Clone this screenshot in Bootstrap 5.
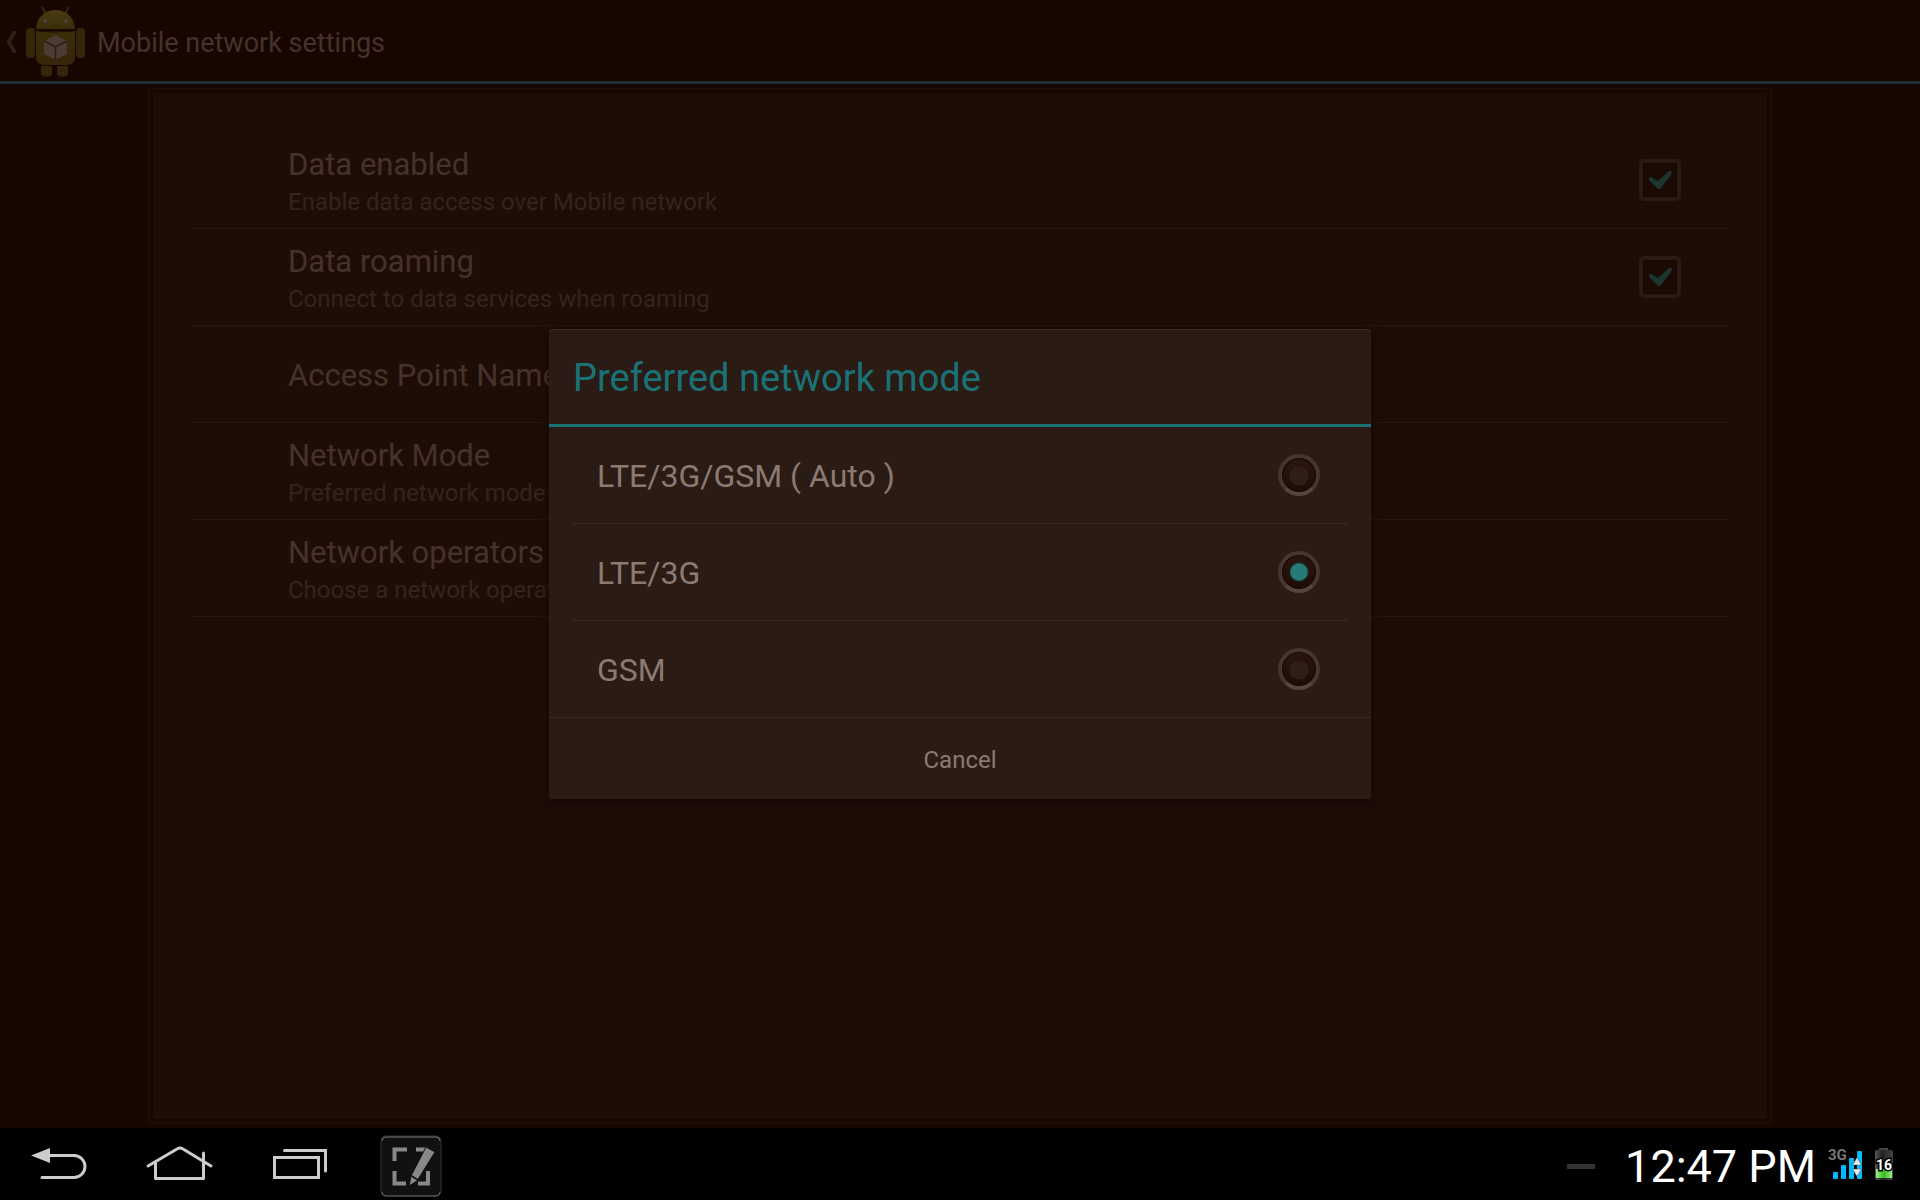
<!DOCTYPE html>
<html lang="en">
<head>
<meta charset="utf-8">
<meta name="viewport" content="width=device-width, initial-scale=1">
<title>Mobile network settings</title>
<link href="https://cdn.jsdelivr.net/npm/bootstrap@5.3.0/dist/css/bootstrap.min.css" rel="stylesheet">
<style>
:root { --dim-teal: #1c2f31; --teal: #1a7277; --ink: #8b7972; --dim-ink: #45322c; --dim-sub: #35231d; }
body { background: #170600; color: var(--dim-ink); font-family: Roboto, "Noto Sans", sans-serif; }
.action-bar { height: 84px; border-bottom: 3px solid var(--dim-teal); }
.action-bar h1 { font-size: 27px; line-height: 36px; font-weight: 400; padding-top: 4px; }
.up-link { color: inherit; padding: 0 9px 0 4px; }
.pref-area { padding: 4px 148px; }
.pref-frame { border: 2px solid #1e0d07; padding: 3px; }
.pref-panel { background: #1e0d07; padding: 39px 39px 0; }
.pref-row { min-height: 97px; border-bottom: 1px solid #27160f; padding: 0 47px 0 96px; }
.pref-text { padding-top: 3px; }
.pref-title { font-size: 31px; line-height: 40px; }
.pref-sub { font-size: 24px; line-height: 34px; color: var(--dim-sub); }
.holo-check { appearance: none; width: 42px; height: 42px; margin: 0; border: 4px solid #2b1a14; border-radius: 5px; box-shadow: inset 0 0 0 1px #130500;
  background: #1b0a04 url("data:image/svg+xml,%3Csvg xmlns='http://www.w3.org/2000/svg' viewBox='0 0 34 34'%3E%3Cpath d='M6 15l2-1 7 4L26 8l3 0-1 4-11 14-2 0-9-9z' fill='%231d3530'/%3E%3C/svg%3E") center/34px no-repeat; }
.picker { width: 822px; background: #2b1b15; border-top: 1px solid #3a2922; border-radius: 3px; box-shadow: 0 4px 10px 2px rgba(16,4,0,.5); color: var(--ink); }
.picker-title { font-size: 38px; line-height: 48px; font-weight: 400; color: var(--teal); padding: 24px 24px 22px; border-bottom: 3px solid var(--teal); }
.picker-row { height: 97px; margin: 0 24px; padding: 0 27px 0 24px; border-bottom: 1px solid #3b2a24; font-size: 32px; }
.picker-row span { padding-top: 1px; }
.picker-row.edge { margin: 0; padding: 0 51px 0 48px; }
.holo-radio { appearance: none; width: 42px; height: 42px; margin: 0; border: 4px solid #463530; border-bottom-color: #57443e; border-radius: 50%; box-shadow: inset 0 0 0 1px #140500;
  background: radial-gradient(circle at 50% 53%, #2f1e18 9px, transparent 10px), linear-gradient(#29170f, #1d0b05); }
.holo-radio:checked { background: radial-gradient(circle, #267a79 8px, #1b3a37 9px, transparent 10px), linear-gradient(#29170f, #1d0b05); }
.picker-cancel { height: 81px; background: none; border: 0; color: inherit; font-size: 24px; padding: 3px 0 0; }
.sys-bar { height: 72px; background: #000; }
.sys-bar button { background: none; border: 0; padding: 0; }
.sys-bar svg { display: block; }
.clock { font-size: 45px; line-height: 52px; color: #fff; padding-top: 5px; }
.status-dash { width: 28px; height: 5px; background: #333; margin: 5px 30px 0 0; }
.status-icons { margin-left: 10px; margin-right: 24px; }
</style>
</head>
<body class="d-flex flex-column min-vh-100">
<div class="position-relative flex-grow-1 d-flex flex-column">
  <header class="action-bar d-flex align-items-center">
    <a href="#" class="up-link d-flex align-items-center text-decoration-none" aria-label="Navigate up">
      <svg width="84" height="76" viewBox="4 3 84 76" aria-hidden="true">
        <path d="M13 31h4l-6 11 6 11h-4L6.500 42z" fill="#302019"/>
        <g fill="#35250a">
          <path d="M42 7l4 7M69 7l-4 7" stroke="#35280b" stroke-width="2"/>
          <path d="M36 29C37 16 46 10 55.500 10S74 16 75 29z" fill="url(#head)"/>
          <path d="M36 31h39v27c0 5-5 7-9 7H45c-4 0-9-2-9-7z" fill="url(#torso)"/>
          <rect x="26" y="28" width="9" height="30" rx="4"/><rect x="76" y="28" width="9" height="30" rx="4"/>
          <path d="M41 66h11v7c0 5-11 5-11 0zM57 66h11v7c0 5-11 5-11 0z"/>
        </g>
        <path d="M38 31q17.500 2 35 0" stroke="#1a0900" fill="none"/>
        <circle cx="45" cy="21" r="2" fill="#50403a"/><circle cx="66" cy="21" r="2" fill="#50403a"/>
        <path d="M55.500 35L67 41v13l-11.500 6L44 54V41z" fill="#4c3a34"/>
        <path d="M44 41l11.500 6L67 41M55.500 47v13" fill="none" stroke="#2d1b10" stroke-width="1.500"/>
        <defs>
          <linearGradient id="head" x2="0" y2="1"><stop stop-color="#4b3b12"/><stop offset="1" stop-color="#363009"/></linearGradient>
          <linearGradient id="torso" x2="0" y2="1"><stop stop-color="#363009"/><stop offset="1" stop-color="#38260b"/></linearGradient>
        </defs>
      </svg>
    </a>
    <h1 class="m-0">Mobile network settings</h1>
  </header>

  <main class="pref-area flex-grow-1 d-flex flex-column">
    <div class="pref-frame flex-grow-1 d-flex">
      <div class="pref-panel flex-grow-1">
        <label class="pref-row d-flex align-items-center justify-content-between">
          <span class="pref-text"><span class="pref-title d-block">Data enabled</span><span class="pref-sub d-block">Enable data access over Mobile network</span></span>
          <input type="checkbox" class="holo-check" checked>
        </label>
        <label class="pref-row d-flex align-items-center justify-content-between">
          <span class="pref-text"><span class="pref-title d-block">Data roaming</span><span class="pref-sub d-block">Connect to data services when roaming</span></span>
          <input type="checkbox" class="holo-check" checked>
        </label>
        <div class="pref-row d-flex align-items-center"><span class="pref-text pref-title">Access Point Names</span></div>
        <div class="pref-row d-flex align-items-center">
          <span class="pref-text"><span class="pref-title d-block">Network Mode</span><span class="pref-sub d-block">Preferred network mode</span></span>
        </div>
        <div class="pref-row d-flex align-items-center">
          <span class="pref-text"><span class="pref-title d-block">Network operators</span><span class="pref-sub d-block">Choose a network operator</span></span>
        </div>
      </div>
    </div>
  </main>

  <div class="position-absolute top-0 start-0 w-100 h-100 d-flex align-items-center justify-content-center">
    <form class="picker" role="dialog" aria-labelledby="picker-title">
      <h2 class="picker-title m-0" id="picker-title">Preferred network mode</h2>
      <label class="picker-row d-flex align-items-center justify-content-between"><span>LTE/3G/GSM ( Auto )</span><input type="radio" name="mode" class="holo-radio"></label>
      <label class="picker-row d-flex align-items-center justify-content-between"><span>LTE/3G</span><input type="radio" name="mode" class="holo-radio" checked></label>
      <label class="picker-row edge d-flex align-items-center justify-content-between"><span>GSM</span><input type="radio" name="mode" class="holo-radio"></label>
      <button type="button" class="picker-cancel w-100">Cancel</button>
    </form>
  </div>
</div>

<footer class="sys-bar d-flex align-items-center justify-content-between">
  <div class="d-flex align-items-center">
    <button type="button" aria-label="Back"><svg width="120" height="72" fill="none" stroke="#ccc" stroke-width="3" stroke-linecap="round"><path d="M31 27.500L50 20v15z" fill="#ccc" stroke="none"/><path d="M48 27.500h26a11 11 0 0 1 0 22H42"/></svg></button>
    <button type="button" aria-label="Home"><svg width="120" height="72" fill="none" stroke="#ccc" stroke-width="3" stroke-linecap="round" stroke-linejoin="round"><path d="M28 38l29-17q3-2 6 0l28 17M35.500 35v15.500h48V25"/></svg></button>
    <button type="button" aria-label="Recent apps"><svg width="120" height="72" fill="none" stroke="#ccc" stroke-width="3" stroke-linecap="round"><path d="M34.500 29.500h44v20h-44zM44.500 22.500h41V43"/></svg></button>
    <button type="button" class="ms-3" aria-label="Capture and edit"><svg width="70" height="72">
      <rect x="5" y="8" width="60" height="60" rx="5" fill="#111" stroke="#333"/>
      <path d="M6 13q0-4 4-4h50q4 0 4 4" fill="none" stroke="#777"/><path d="M6 64q0 4 4 4h50q4 0 4-4" fill="none" stroke="#666"/>
      <path d="M18.500 33V21.500H31M40 21.500h10M18.500 43v12.500H30M42 55.500h10V43" fill="none" stroke="#888" stroke-width="4"/>
      <path d="M50 19l9 5-18 29-8 5 2-10z" fill="#888" stroke="#111" stroke-width="1"/><path d="M34 47l8 5" stroke="#111" stroke-width="1.500"/>
    </svg></button>
  </div>
  <div class="d-flex align-items-center">
    <span class="status-dash"></span>
    <span class="clock">12:47 PM</span>
    <svg class="status-icons" width="70" height="40" viewBox="1826 1146 70 40" font-family="Roboto, sans-serif" font-weight="700">
      <text x="1828" y="1162" font-size="15" fill="#777">3G</text>
      <g fill="#0bf"><rect x="1833" y="1174" width="5" height="7" rx="1"/><rect x="1841" y="1167" width="5" height="14" rx="1"/><rect x="1849" y="1160" width="5" height="21" rx="1"/><rect x="1857" y="1153" width="5" height="28" rx="1"/></g>
      <path d="M1852.500 1167h9l-4.500-7.500zM1852.500 1171h9l-4.500 7.500z" fill="#e8e8e8" stroke="#555" stroke-width=".5"/>
      <defs><linearGradient id="cell"><stop stop-color="#555"/><stop offset=".4" stop-color="#222"/><stop offset="1" stop-color="#444"/></linearGradient>
      <linearGradient id="charge"><stop stop-color="#9e8"/><stop offset=".5" stop-color="#3b2"/><stop offset="1" stop-color="#9e8"/></linearGradient></defs>
      <rect x="1879" y="1150" width="9" height="3" fill="#444"/><rect x="1875" y="1152" width="18" height="30" rx="2" fill="url(#cell)"/><rect x="1876" y="1171" width="16" height="9" fill="url(#charge)"/>
      <text x="1884" y="1172" font-size="14" text-anchor="middle" fill="#fff" stroke="#000" stroke-width="3" paint-order="stroke">16</text>
    </svg>
  </div>
</footer>
<script src="https://cdn.jsdelivr.net/npm/bootstrap@5.3.0/dist/js/bootstrap.bundle.min.js"></script>
</body>
</html>
